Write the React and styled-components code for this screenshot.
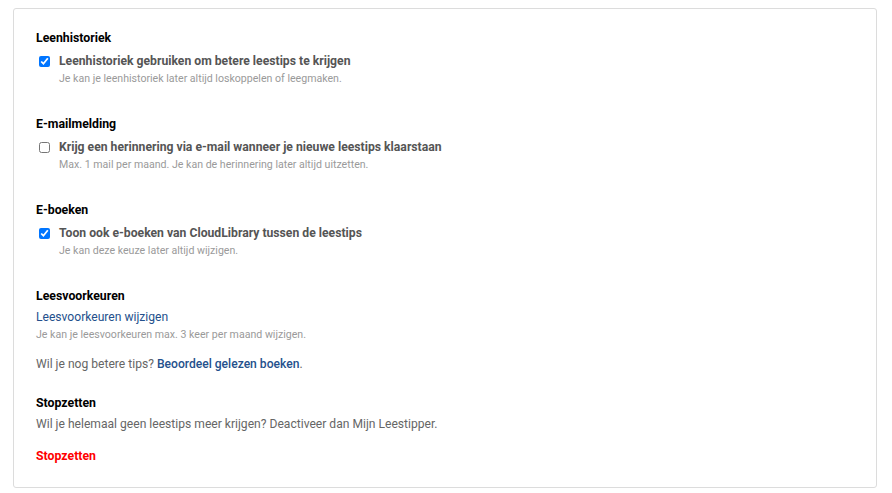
import React, { useState } from 'react';
import styled, { createGlobalStyle } from 'styled-components';

const GlobalStyle = createGlobalStyle`
  body {
    margin: 0;
    background: #fff;
    font-family: Roboto, "Liberation Sans", sans-serif;
  }
`;

const Page = styled.div`
  padding: 8px 15px 5px 13px;
`;

const Card = styled.div`
  border: 1px solid #dcdcdc;
  border-radius: 3px;
  padding: 21px 22px 22px 22px;
  display: flex;
  flex-direction: column;
`;

const Section = styled.section`
  display: flex;
  flex-direction: column;
  margin-top: ${p => p.$space || 0}px;
`;

const Heading = styled.h3`
  margin: 0 0 4px 0;
  font-size: 12.3px;
  line-height: 16px;
  font-weight: 700;
  color: #000;
`;

const CheckRow = styled.label`
  display: grid;
  grid-template-columns: 11px 1fr;
  column-gap: 9px;
  padding: 2px 0 0 3px;
  align-items: center;
`;

const Box = styled.input`
  width: 11px;
  height: 11px;
  margin: 0;
  accent-color: #0075ff;
`;

const CheckLabel = styled.span`
  font-size: 12.2px;
  line-height: 18px;
  font-weight: 700;
  color: #555;
`;

const Hint = styled.span`
  grid-column: 2;
  font-size: 10.6px;
  line-height: 18px;
  color: #9a9a9a;
`;

const Link = styled.a`
  font-size: 12.1px;
  line-height: 18px;
  color: #24508c;
  text-decoration: none;
  font-weight: ${p => (p.$bold ? 500 : 400)};
`;

const SmallHint = styled.div`
  font-size: 10.6px;
  line-height: 18px;
  color: #9a9a9a;
`;

const Text = styled.p`
  margin: ${p => p.$top || 0}px 0 0 0;
  font-size: 12.1px;
  line-height: 18px;
  color: #666;
`;

const Danger = styled.a`
  display: block;
  margin-top: 14px;
  font-size: 12.3px;
  line-height: 18px;
  font-weight: 700;
  color: #f00;
  text-decoration: none;
`;

const Option = ({ checked, onToggle, label, hint }) => (
  <CheckRow>
    <Box type="checkbox" checked={checked} onChange={onToggle} />
    <CheckLabel>{label}</CheckLabel>
    <Hint>{hint}</Hint>
  </CheckRow>
);

export default function App() {
  const [history, setHistory] = useState(true);
  const [mail, setMail] = useState(false);
  const [ebooks, setEbooks] = useState(true);

  return (
    <Page>
      <GlobalStyle />
      <Card>
        <Section>
          <Heading>Leenhistoriek</Heading>
          <Option
            checked={history}
            onToggle={() => setHistory(!history)}
            label="Leenhistoriek gebruiken om betere leestips te krijgen"
            hint="Je kan je leenhistoriek later altijd loskoppelen of leegmaken."
          />
        </Section>
        <Section $space={28}>
          <Heading>E-mailmelding</Heading>
          <Option
            checked={mail}
            onToggle={() => setMail(!mail)}
            label="Krijg een herinnering via e-mail wanneer je nieuwe leestips klaarstaan"
            hint="Max. 1 mail per maand. Je kan de herinnering later altijd uitzetten."
          />
        </Section>
        <Section $space={28}>
          <Heading>E-boeken</Heading>
          <Option
            checked={ebooks}
            onToggle={() => setEbooks(!ebooks)}
            label="Toon ook e-boeken van CloudLibrary tussen de leestips"
            hint="Je kan deze keuze later altijd wijzigen."
          />
        </Section>
        <Section $space={28}>
          <Heading>Leesvoorkeuren</Heading>
          <Link href="#">Leesvoorkeuren wijzigen</Link>
          <SmallHint>Je kan je leesvoorkeuren max. 3 keer per maand wijzigen.</SmallHint>
          <Text $top={11}>
            Wil je nog betere tips? <Link href="#" $bold>Beoordeel gelezen boeken</Link>.
          </Text>
        </Section>
        <Section $space={22}>
          <Heading>Stopzetten</Heading>
          <Text>Wil je helemaal geen leestips meer krijgen? Deactiveer dan Mijn Leestipper.</Text>
          <Danger href="#">Stopzetten</Danger>
        </Section>
      </Card>
    </Page>
  );
}
